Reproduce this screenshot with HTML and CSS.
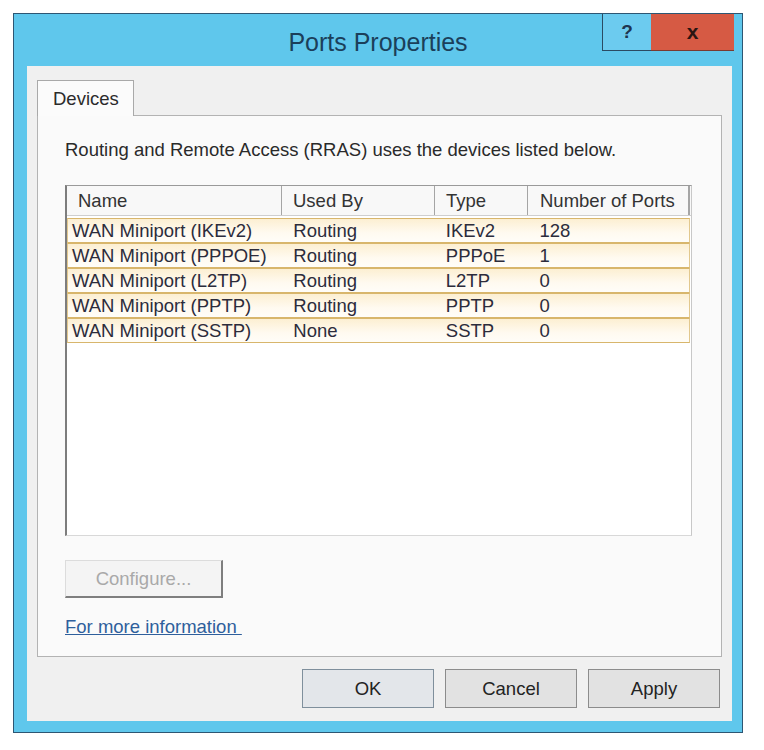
FILE: index.html
```html
<!DOCTYPE html>
<html>
<head>
<meta charset="utf-8">
<link rel="stylesheet" href="styles.css">
</head>
<body>
<div class="window">
  <div class="titlebar">
    <div class="tb-side"></div>
    <div class="title">Ports Properties</div>
    <div class="tb-side tb-buttons">
      <div class="cap-btn help">?</div>
      <div class="cap-btn close">x</div>
    </div>
  </div>
  <div class="client">
    <div class="tabs">
      <div class="tab">Devices</div>
    </div>
    <div class="panel">
      <div class="desc">Routing and Remote Access (RRAS) uses the devices listed below.</div>
      <div class="listview">
        <div class="lv-header">
          <div class="hcell c1">Name</div>
          <div class="hcell c2">Used By</div>
          <div class="hcell c3">Type</div>
          <div class="hcell c4">Number of Ports</div>
        </div>
        <div class="lv-rows">
          <div class="row"><div class="cell c1">WAN Miniport (IKEv2)</div><div class="cell c2">Routing</div><div class="cell c3">IKEv2</div><div class="cell c4">128</div></div>
          <div class="row"><div class="cell c1">WAN Miniport (PPPOE)</div><div class="cell c2">Routing</div><div class="cell c3">PPPoE</div><div class="cell c4">1</div></div>
          <div class="row"><div class="cell c1">WAN Miniport (L2TP)</div><div class="cell c2">Routing</div><div class="cell c3">L2TP</div><div class="cell c4">0</div></div>
          <div class="row"><div class="cell c1">WAN Miniport (PPTP)</div><div class="cell c2">Routing</div><div class="cell c3">PPTP</div><div class="cell c4">0</div></div>
          <div class="row"><div class="cell c1">WAN Miniport (SSTP)</div><div class="cell c2">None</div><div class="cell c3">SSTP</div><div class="cell c4">0</div></div>
        </div>
      </div>
      <div class="configure">Configure...</div>
      <a class="more" href="#">For more information </a>
    </div>
    <div class="buttons">
      <div class="btn ok">OK</div>
      <div class="btn">Cancel</div>
      <div class="btn">Apply</div>
    </div>
  </div>
</div>
</body>
</html>
```

FILE: styles.css
```css
* { box-sizing: border-box; }
html, body { margin: 0; padding: 0; background: #ffffff; }
body {
  font-family: "Liberation Sans", Arial, sans-serif;
  font-size: 18.5px;
  color: #2b2b30;
}
.window {
  margin: 13px 0 0 13px;
  width: 730px;
  height: 720px;
  border: 1px solid #2d5673;
  background: #5fc7ec;
  display: flex;
  flex-direction: column;
}
.titlebar {
  height: 52px;
  display: grid;
  grid-template-columns: 1fr auto 1fr;
  align-items: center;
}
.title {
  font-size: 25px;
  color: #1b3f5a;
  padding-top: 5px;
}
.tb-buttons {
  align-self: start;
  display: flex;
  justify-content: flex-end;
  padding-right: 8px;
}
.cap-btn {
  height: 37px;
  display: flex;
  align-items: center;
  justify-content: center;
  font-weight: bold;
  font-size: 19px;
}
.help {
  width: 49px;
  border-left: 1px solid #2b4b63;
  border-bottom: 1px solid #2b4b63;
  color: #1e3550;
  background: #6ccbef;
}
.close {
  width: 83px;
  background: #d65a44;
  border-bottom: 1px solid #7a3a30;
  color: #2a1512;
  font-size: 21px;
}
.client {
  flex: 1;
  margin: 0 10px 11px 13px;
  background: #f0f0f0;
  padding: 14px 10px 0 10px;
  display: flex;
  flex-direction: column;
}
.tabs { display: flex; }
.tab {
  width: 97px;
  height: 36px;
  border: 1px solid #a9a9a9;
  border-bottom: none;
  background: #fbfbfb;
  margin-bottom: -1px;
  position: relative;
  z-index: 1;
  padding-left: 15px;
  display: flex;
  align-items: center;
  color: #2b2b2b;
}
.panel {
  height: 542px;
  border: 1px solid #b3b3b3;
  background: #fafafa;
  padding: 23px 0 0 27px;
  display: flex;
  flex-direction: column;
  align-items: flex-start;
}
.desc {
  line-height: 22px;
  color: #2a2a2a;
}
.listview {
  margin-top: 24px;
  width: 627px;
  height: 351px;
  background: #ffffff;
  border-top: 1px solid #9a9a9a;
  border-left: 2px solid #7d7d7d;
  border-right: 1px solid #c8c8c8;
  border-bottom: 1px solid #d8d8d8;
}
.lv-header {
  display: flex;
  height: 30px;
  background: #f8f8f8;
  border-bottom: 1px solid #cfcfcf;
}
.hcell {
  display: flex;
  align-items: center;
  border-right: 1px solid #a5a5a5;
  color: #333333;
  padding-left: 11px;
}
.c1 { width: 215px; }
.c2 { width: 153px; }
.c3 { width: 93px; }
.c4 { width: 162px; }
.hcell.c4 { padding-left: 12px; border-right: 2px solid #a5a5a5; }
.lv-rows { padding-top: 2px; }
.row {
  display: flex;
  height: 25px;
  width: 623px;
  border-top: 1px solid #d8b66c;
  border-bottom: 1px solid #d8b66c;
  border-left: 1px solid #e2c88e;
  border-right: 1px solid #e2c88e;
  background: linear-gradient(#fcefd2, #fffaf0 60%, #fffdf8);
}
.cell {
  display: flex;
  align-items: center;
  padding-left: 11px;
  color: #2c2c3c;
  white-space: nowrap;
}
.cell.c1 { padding-left: 4px; }
.cell.c4 { padding-left: 12px; }
.configure {
  margin-top: 24px;
  width: 158px;
  height: 38px;
  border-top: 1px solid #dcdcdc;
  border-left: 1px solid #dcdcdc;
  border-right: 2px solid #7e7e7e;
  border-bottom: 2px solid #7e7e7e;
  background: #f4f4f4;
  color: #a9a9a9;
  display: flex;
  align-items: center;
  justify-content: center;
}
.more {
  margin-top: 18px;
  line-height: 22px;
  color: #2f5f9c;
  text-decoration: underline;
  white-space: pre;
}
.buttons {
  margin-top: 12px;
  display: flex;
  justify-content: flex-end;
  gap: 11px;
  padding-right: 2px;
}
.btn {
  width: 132px;
  height: 39px;
  border: 1px solid #8c8c8c;
  background: #e2e2e2;
  display: flex;
  align-items: center;
  justify-content: center;
  color: #232323;
}
.btn.ok {
  background: #e3e6ea;
  border-color: #7f8f9c;
}
```
